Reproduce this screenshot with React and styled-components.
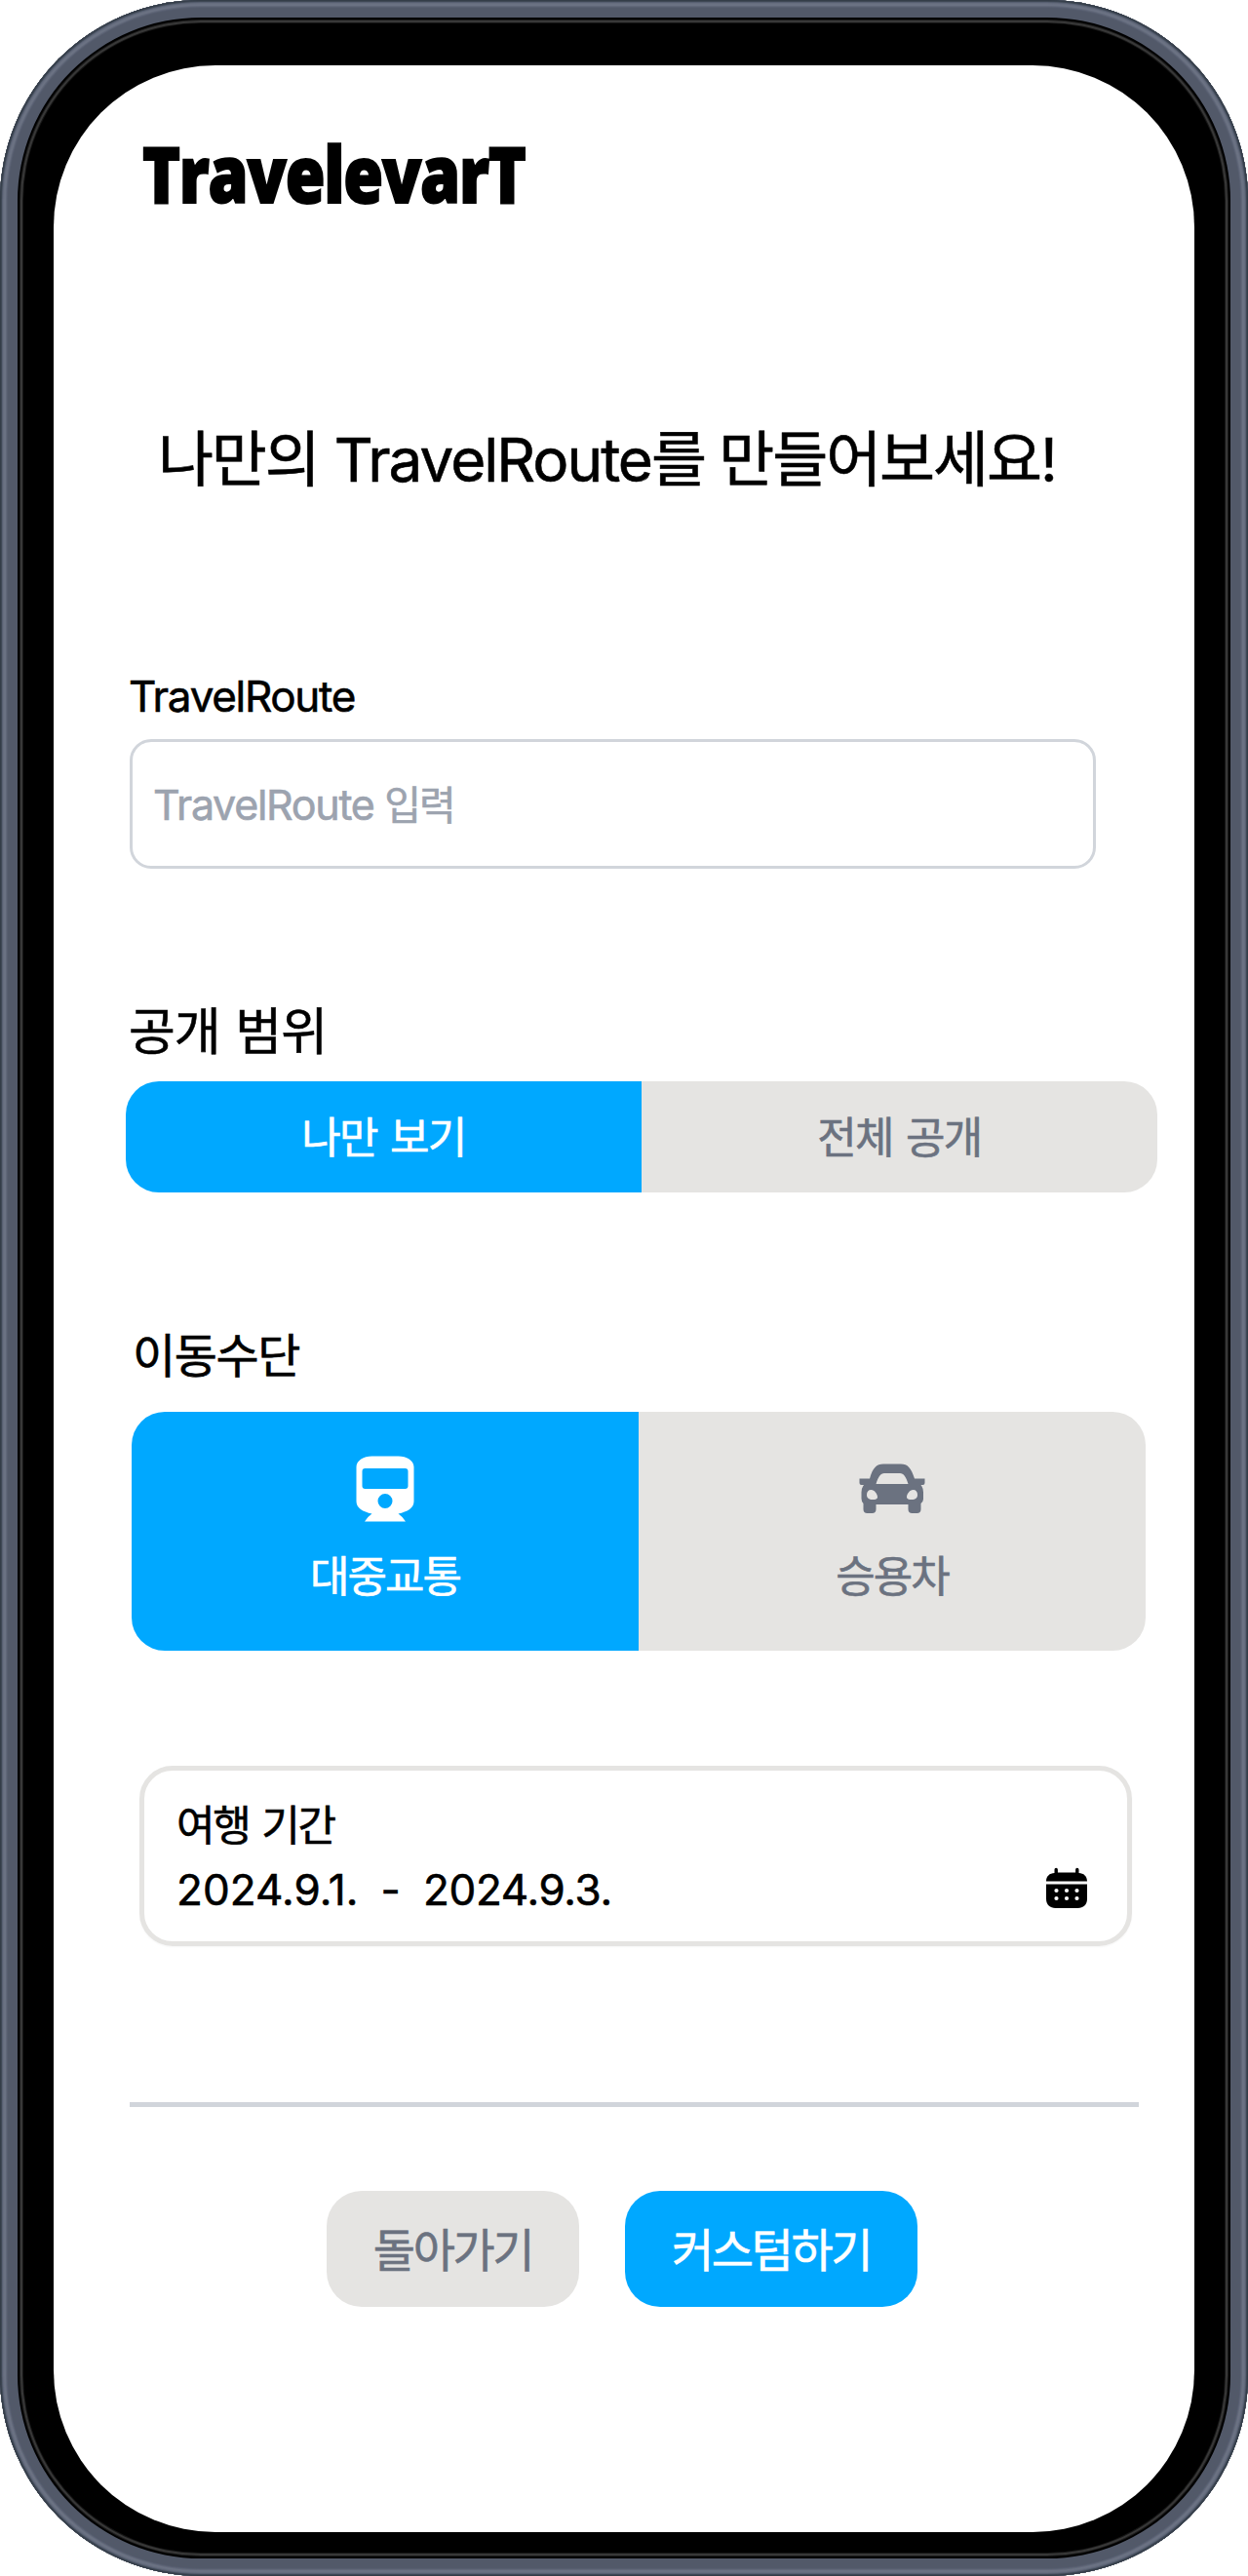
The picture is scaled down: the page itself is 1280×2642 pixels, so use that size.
import React from "react";
import styled, { createGlobalStyle } from "styled-components";

const Global = createGlobalStyle`
  * { box-sizing: border-box; }
  body { margin: 0; background: #fff; }
  button, input { font: inherit; letter-spacing: inherit; border: 0; padding: 0; margin: 0; }
`;

const Phone = styled.div`
  width: 1280px;
  height: 2642px;
  padding: 67px 55px 45px;
  border-radius: 206px;
  background: #000;
  box-shadow:
    inset 0 0 0 1px #343d48,
    inset 0 0 0 2px #3f4855,
    inset 0 0 0 3px #586072,
    inset 0 0 0 4px #666d7e,
    inset 0 0 0 6px #6b7283,
    inset 0 0 0 7px #616879,
    inset 0 0 0 8px #575e70,
    inset 0 0 0 18px #525969,
    inset 0 0 0 20px #000,
    inset 0 0 0 21px #1c1c1c,
    inset 0 0 0 23px #383838,
    inset 0 0 0 24px #161616;
`;

const Screen = styled.main`
  display: flex;
  flex-direction: column;
  height: 2530px;
  padding: 71px 0 0 74px;
  border-radius: 166px;
  background: #fff;
  color: #000;
  font-family: Inter, "Noto Sans CJK KR", sans-serif;
  font-size: 44px;
  white-space: pre;
  -webkit-text-stroke: 0.6px currentColor;
`;

const Logo = styled.h1`
  width: max-content;
  height: 80px;
  margin: 0 0 0 17px;
  line-height: 78px;
  font-family: "Open Sans", sans-serif;
  font-size: 80px;
  font-weight: 800;
  letter-spacing: -1.5px;
  -webkit-text-stroke: 2px #000;
  transform: scaleX(0.826);
  transform-origin: left center;
`;

const Title = styled.h2`
  height: 80px;
  margin: 214px 0 0 33px;
  line-height: 80px;
  font-size: 62px;
  font-weight: 400;
  letter-spacing: -2px;
`;

const Ko = styled.span`
  font-size: ${(p) => (p.$size ? `${p.$size}px` : "inherit")};
  letter-spacing: ${(p) => p.$spacing || 0}px;
  word-spacing: ${(p) => p.$word || 0}px;
`;

const Label = styled.label`
  display: block;
  height: 60px;
  margin: ${(p) => p.$top}px 0 0 ${(p) => p.$left}px;
  line-height: ${(p) => p.$line || 60}px;
  font-size: ${(p) => p.$size}px;
  letter-spacing: ${(p) => p.$spacing || 0}px;
  word-spacing: ${(p) => p.$word || 0}px;
`;

const Field = styled.div`
  display: flex;
  align-items: center;
  width: 991px;
  height: 133px;
  margin: 14px 0 0 4px;
  padding: 0 0 3px 21px;
  border: 3px solid #d1d5db;
  border-radius: 22px;
  color: #9ca3af;
  font-size: 43px;
  letter-spacing: -1.3px;
`;

const Segments = styled.div`
  display: grid;
  grid-template-columns: 1fr 1fr;
  width: ${(p) => p.$width}px;
  height: ${(p) => p.$height}px;
  margin: ${(p) => p.$top}px 0 0 ${(p) => p.$left}px;
  border-radius: 34px;
  overflow: hidden;
`;

const Segment = styled.button`
  display: flex;
  flex-direction: column;
  align-items: center;
  justify-content: ${(p) => (p.$tall ? "flex-start" : "center")};
  gap: 26px;
  padding-top: ${(p) => (p.$tall ? 45 : 2)}px;
  background: ${(p) => (p.$active ? "#00a8ff" : "#e5e4e2")};
  color: ${(p) => (p.$active ? "#fff" : "#6b7280")};
  line-height: 60px;
`;

const PeriodCard = styled.section`
  display: flex;
  justify-content: space-between;
  align-items: flex-start;
  width: 1018px;
  height: 185px;
  margin: 118px 0 0 14px;
  padding: 26px 40px 0 33px;
  border: 5px solid #e5e4e2;
  border-radius: 34px;
  box-shadow: 0 1px 2px rgba(0, 0, 0, 0.04);
`;

const Period = styled.div`
  display: flex;
  flex-direction: column;
  gap: 6px;
  line-height: 60px;
`;

const Dates = styled.div`
  display: flex;
  gap: 23px;
  letter-spacing: 0.1px;
`;

const EndDate = styled.span`
  letter-spacing: -0.3px;
`;

const Divider = styled.hr`
  width: 1035px;
  height: 5px;
  margin: 160px 0 0 4px;
  border: 0;
  background: #d1d5db;
`;

const Actions = styled.div`
  display: flex;
  gap: 47px;
  margin: 86px 0 0 206px;
`;

const Action = styled.button`
  width: ${(p) => p.$width}px;
  height: 119px;
  padding-bottom: 4px;
  border-radius: 36px;
  background: ${(p) => (p.$primary ? "#00a8ff" : "#e5e4e2")};
  color: ${(p) => (p.$primary ? "#fff" : "#6b7280")};
  font-size: 47px;
`;

const CalendarSlot = styled.span`
  display: flex;
  margin-top: 73px;
`;

const TrainIcon = () => (
  <svg width="68" height="68" viewBox="0 0 68 68" fill="currentColor" stroke="none">
    <path
      fillRule="evenodd"
      d="M20.500 .5h27C56 .5 63.500 5 63.500 11.500v35.500c0 6.500-6.500 10.500-16 12.500q5 3.500 7.500 8H13q2.500-4.500 7.500-8C11 57.500 4.500 53.500 4.500 47V11.500C4.500 5 12 .5 20.500 .5zM13.500 13q-3 0-3 3v15q0 3 3 3h41q3 0 3-3V16q0-3-3-3zM34 39a7.500 7.500 0 1 0 0 15 7.500 7.500 0 0 0 0-15z"
    />
  </svg>
);

const CarIcon = () => (
  <svg width="68" height="68" viewBox="0 0 68 68" fill="currentColor" stroke="none">
    <path
      fillRule="evenodd"
      d="M25 8.500h18c7 0 10.500 4 14 15h10.500v4.500q0 2-2 2h-2q2.500 3 2.500 7.500v7q0 2.500-2.500 4.500v6c0 2.500-1.500 4-4 4h-5c-2.500 0-4-1.500-4-4v-5H17.500v5c0 2.500-1.500 4-4 4h-5c-2.500 0-4-1.500-4-4v-6Q2.500 47 2.500 44v-6.500Q2.500 33 5 30H2.500q-2 0-2-2v-4.500H11c3-11 7-15 14-15zM26 18c-4 0-6 3.500-8.500 11h33C48 21.500 46 18 42 18zM12.500 35c-3 0-4.500 2-4.500 5 0 3.500 2 5 6 5 3 0 5-.5 5-2.500 0-3-3-7.500-6.500-7.500zm43 0c3 0 4.500 2 4.500 5 0 3.500-2 5-6 5-3 0-5-.5-5-2.500 0-3 3-7.500 6.500-7.500z"
    />
  </svg>
);

const CalendarIcon = () => (
  <svg width="44" height="44" viewBox="0 0 44 44" fill="currentColor" stroke="none">
    <path d="M1 14.500C1 9.500 4.500 6 9.500 6V2.500a1.700 1.700 0 0 1 3.400 0v3h18.200v-3a1.700 1.700 0 0 1 3.400 0V6C39.500 6 43 9.500 43 14.500z" />
    <path d="M1 17.500h42V32.500c0 6-4 9.500-9.500 9.500h-23C5 42 1 38.500 1 32.500z" />
    <g fill="#fff">
      {[11.500, 22, 32.500].map((x) =>
        [24, 32].map((y) => <circle key={`${x}-${y}`} cx={x} cy={y} r="2.100" />)
      )}
    </g>
  </svg>
);

export default function App() {
  return (
    <>
      <Global />
      <Phone>
        <Screen>
          <Logo>TravelevarT</Logo>
          <Title>
            <Ko $spacing={-2.2} $word={1}>나만의 </Ko>TravelRoute<Ko $spacing={-2.1} $word={-1}>를 만들어보세요!</Ko>
          </Title>
          <Label $top={172} $left={3} $size={44} $spacing={-1.3}>TravelRoute</Label>
          <Field>
            <span>TravelRoute <Ko $size={41} $spacing={-2}>입력</Ko></span>
          </Field>
          <Label $top={137} $left={3} $size={52} $spacing={-1} $word={2} $line={62}>공개 범위</Label>
          <Segments $top={21} $left={0} $width={1058} $height={114}>
            <Segment $active><Ko $spacing={-1.7} $word={2.5}>나만 보기</Ko></Segment>
            <Segment><Ko $spacing={-1.7} $word={2.5}>전체 공개</Ko></Segment>
          </Segments>
          <Label $top={136} $left={7} $size={48} $spacing={-1.4} $line={63}>이동수단</Label>
          <Segments $top={29} $left={6} $width={1040} $height={245}>
            <Segment $active $tall><TrainIcon /><Ko $spacing={-2}>대중교통</Ko></Segment>
            <Segment $tall><CarIcon /><Ko $spacing={-2}>승용차</Ko></Segment>
          </Segments>
          <PeriodCard>
            <Period>
              <Ko $size={43} $spacing={-2.3} $word={3}>여행 기간</Ko>
              <Dates>
                <span>2024.9.1.</span>
                <span>-</span>
                <EndDate>2024.9.3.</EndDate>
              </Dates>
            </Period>
            <CalendarSlot><CalendarIcon /></CalendarSlot>
          </PeriodCard>
          <Divider />
          <Actions>
            <Action $width={259}><Ko $spacing={-2.4}>돌아가기</Ko></Action>
            <Action $width={300} $primary><Ko $spacing={-2.4}>커스텀하기</Ko></Action>
          </Actions>
        </Screen>
      </Phone>
    </>
  );
}
